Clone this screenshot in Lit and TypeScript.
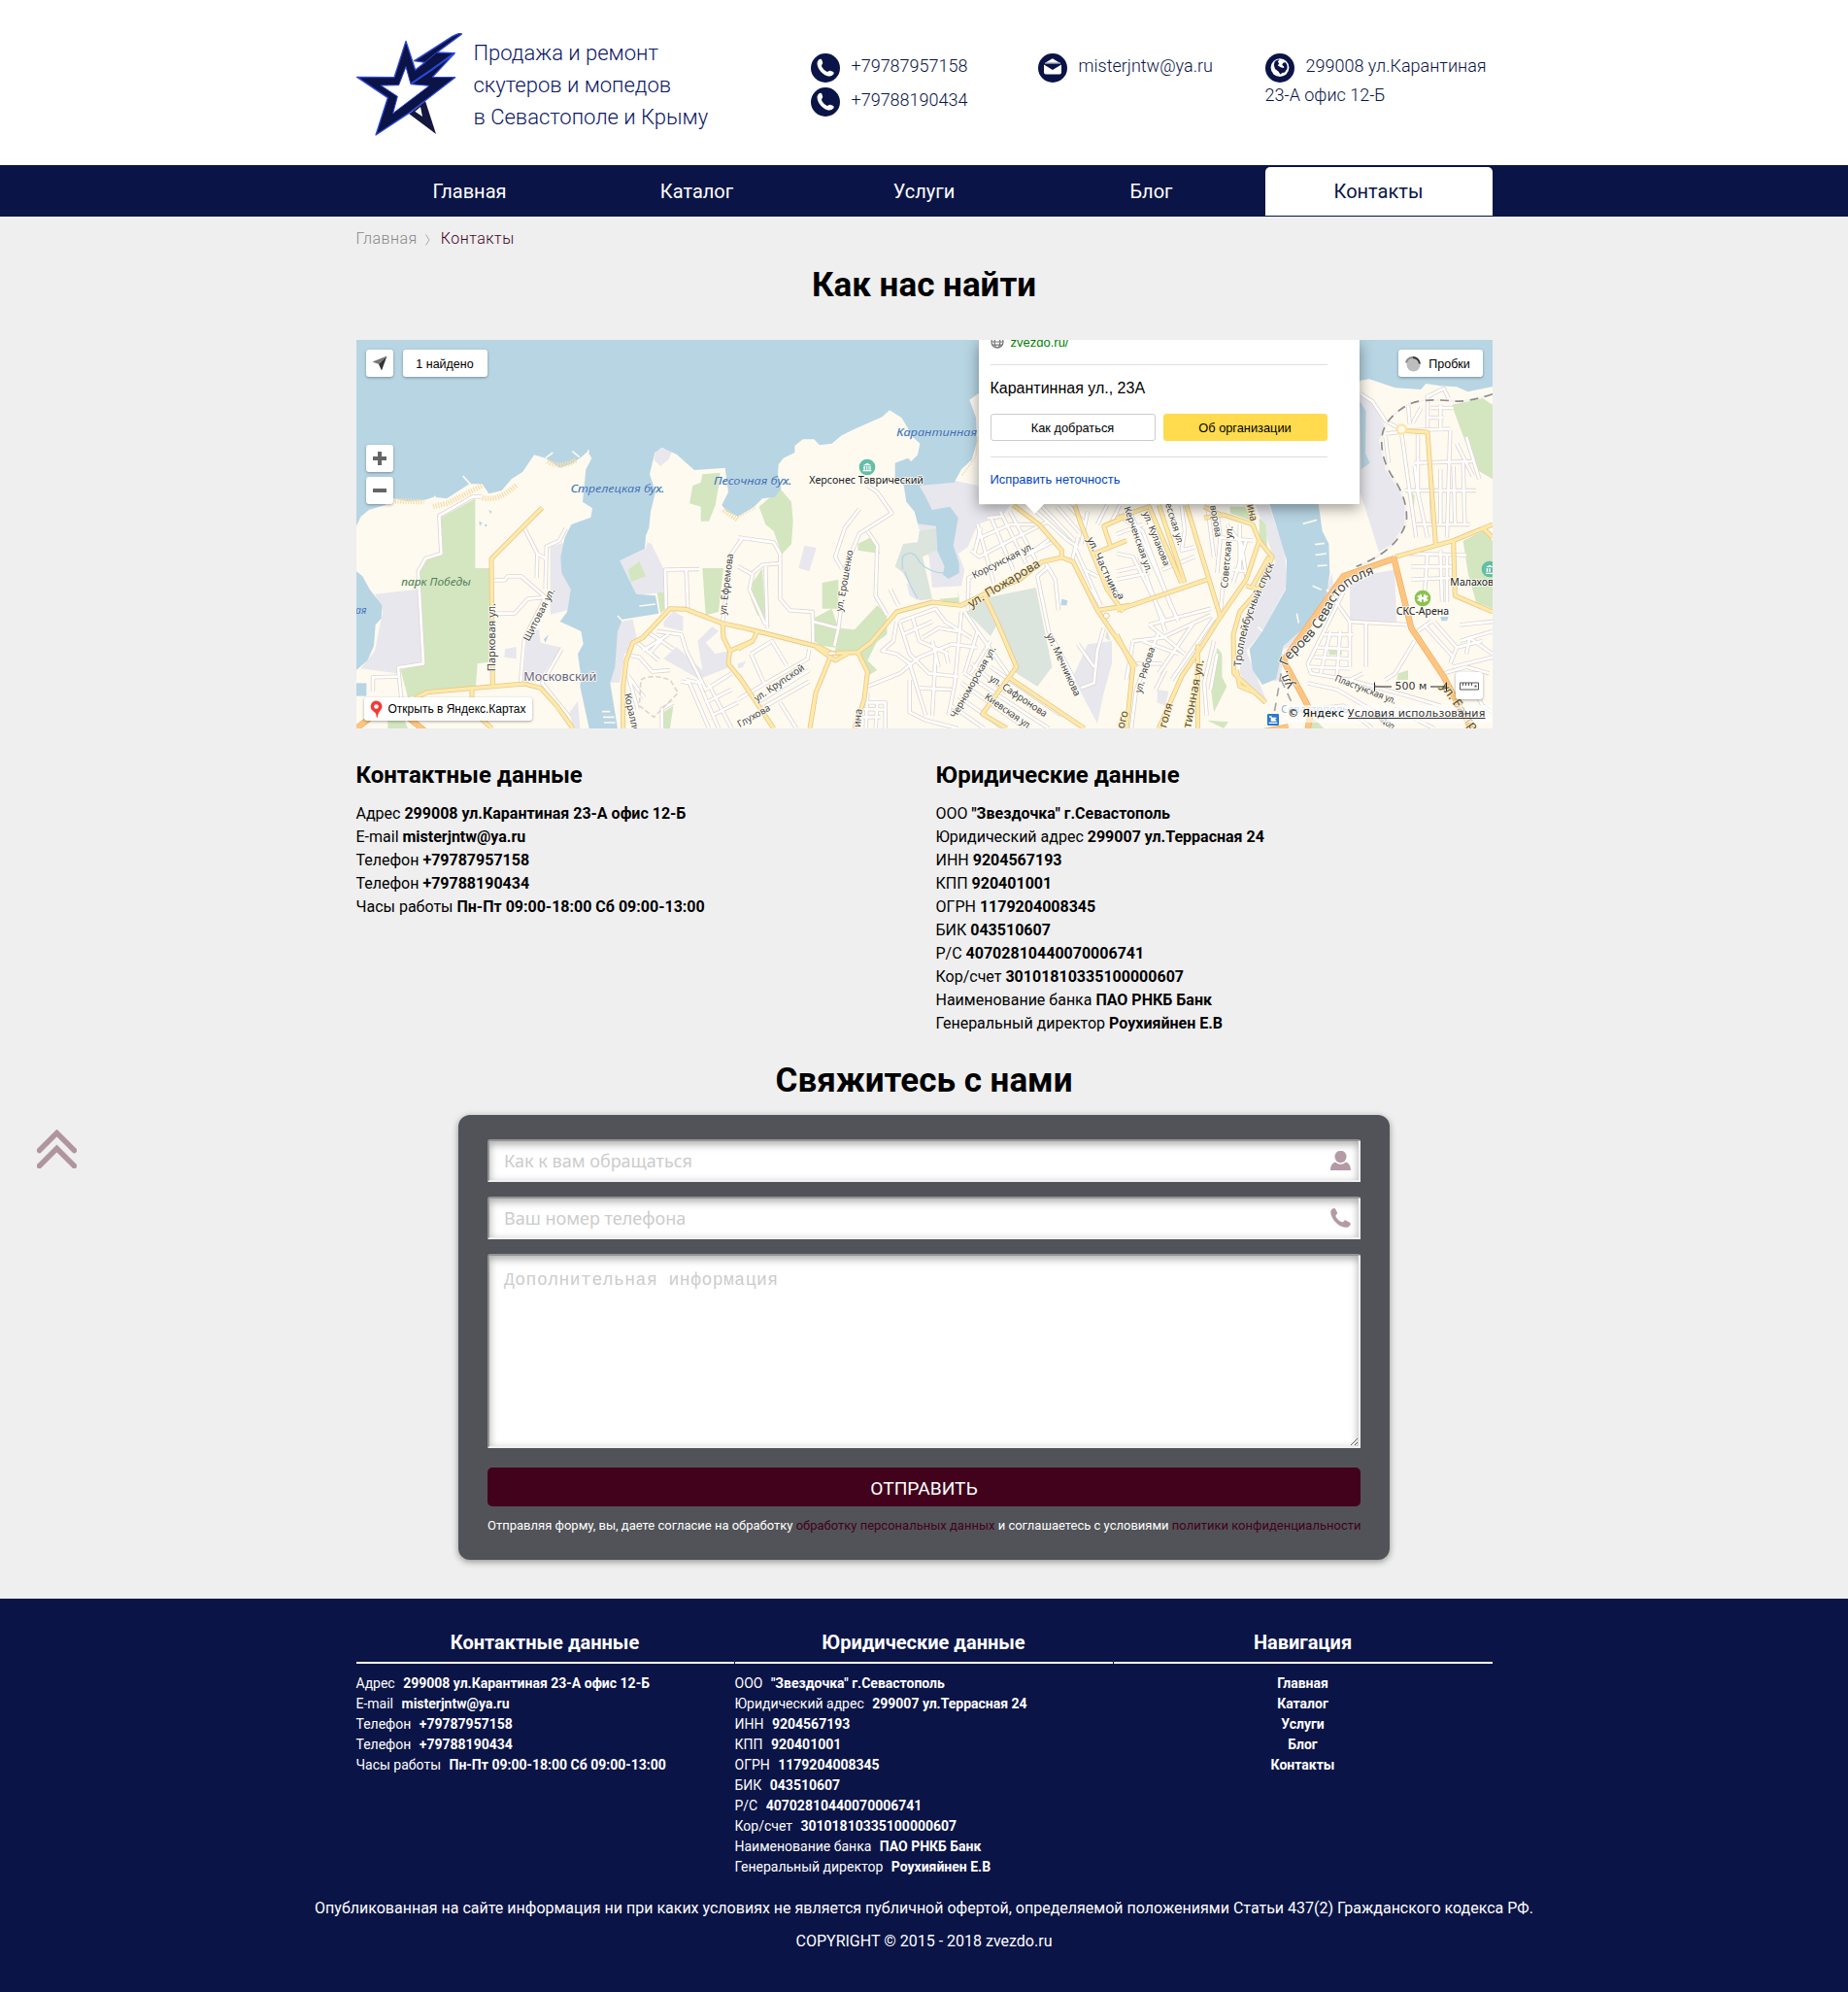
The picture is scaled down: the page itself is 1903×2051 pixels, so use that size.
import { LitElement, html, css, svg } from "lit";
import { customElement, property } from "lit/decorators.js";

type Row = [string, string];

const CONTACTS: Row[] = [
  ["Адрес", "299008 ул.Карантиная 23-А офис 12-Б"],
  ["E-mail", "misterjntw@ya.ru"],
  ["Телефон", "+79787957158"],
  ["Телефон", "+79788190434"],
  ["Часы работы", "Пн-Пт 09:00-18:00 Сб 09:00-13:00"],
];

const LEGAL: Row[] = [
  ["ООО", '"Звездочка" г.Севастополь'],
  ["Юридический адрес", "299007 ул.Террасная 24"],
  ["ИНН", "9204567193"],
  ["КПП", "920401001"],
  ["ОГРН", "1179204008345"],
  ["БИК", "043510607"],
  ["Р/С", "40702810440070006741"],
  ["Кор/счет", "30101810335100000607"],
  ["Наименование банка", "ПАО РНКБ Банк"],
  ["Генеральный директор", "Роухияйнен Е.В"],
];

const PAGES = ["Главная", "Каталог", "Услуги", "Блог", "Контакты"];

const phoneIcon = html`<svg class="ico" viewBox="0 0 30 30">
  <circle cx="15" cy="15" r="15" fill="#0a1446" />
  <path
    fill="#fff"
    d="M8.2 6.6 C9.6 5.2 11 5.9 11.5 7.3 L12.2 9.6 C12.5 10.7 11.2 11.6 11 12.6 C11.3 15 14.4 18.2 16.9 18.9 C18 18.8 18.7 17.4 19.8 17.7 L22.6 18.7 C23.9 19.3 24 20.6 23.2 21.6 C21.6 23.6 19 23.9 16.3 22.9 C11.4 21 7.4 16.2 6.6 11.4 C6.3 9.4 6.9 7.7 8.2 6.6Z"
  />
</svg>`;

const mailIcon = html`<svg class="ico" viewBox="0 0 30 30">
  <circle cx="15" cy="15" r="15" fill="#0a1446" />
  <path fill="#fff" d="M7.6 9.6 L14.8 5.2 L22 9.6Z" />
  <path fill="#fff" d="M6 11.6 L14.9 17 L24 11.6 V19.5 Q24 21.4 22 21.4 H8 Q6 21.4 6 19.5Z" />
  <path fill="#0a1446" d="M7.2 10.4 H22.8 L15 15.6Z" />
  <path d="M7 10 H23" stroke="#fff" stroke-width="0.9" />
</svg>`;

const globeIcon = html`<svg class="ico" viewBox="0 0 30 30">
  <circle cx="15" cy="15" r="15" fill="#0a1446" />
  <circle cx="15" cy="14.6" r="9.4" fill="#fff" />
  <path
    fill="#0a1446"
    d="M9.6 8.4 C11 7.2 12.8 6.6 14.6 6.6 L12.8 8.6 L14.2 10.2 L12.8 12.6 L16.4 14.6 L19.2 15 L19 13.2 L17.2 12 L18.2 9.8 L20.8 9.2 C22.4 11 23 13.4 22.4 15.8 L20 19.6 L17.4 20 L15.4 21.4 L13.4 18.4 L10 16 L8.8 12Z"
  />
</svg>`;

const logo = html`<svg class="logo" viewBox="21 42 327 318">
  <path fill="#14183f" d="M184 292 L234 252 L267 354Z" />
  <path fill="#fff" d="M202 284 L219 270 L225 300Z" />
  <path
    fill="#0b1347"
    stroke="#2d49d6"
    stroke-width="4"
    stroke-linejoin="round"
    d="M23 178 L138 179 L174 67 L203 156 L233 133 L200 128 L318 52 Q346 38 346 46 L270 102 L325 104 L256 178 L326 179 L188 286 L81 357 L118 242Z"
  />
  <path fill="#fff" stroke="#2d49d6" stroke-width="3" d="M97 204 L152 203 L174 146 L189 200 L246 205 L134 290 L148 238Z" />
  <path fill="none" stroke="#2d49d6" stroke-width="6" d="M189 199 L250 158 L322 106" />
  <path fill="none" stroke="#2d49d6" stroke-width="3" d="M232 133 L268 103" />
</svg>`;

@customElement("site-header")
export class SiteHeader extends LitElement {
  static styles = css`
    :host { display: block; background: #fff; height: 170px; }
    .inner { width: 1170px; margin: 0 auto; display: grid; grid-template-columns: 468px 234px 234px 234px; }
    .brand { display: flex; padding-top: 34px; gap: 12px; color: #0b1766; }
    .logo { width: 109px; height: 106px; flex: none; }
    .slogan { font-size: 22px; line-height: 33px; font-weight: 300; padding-top: 4px; white-space: nowrap; }
    .contact { padding-top: 54px; font-size: 18px; line-height: 27px; font-weight: 300; color: #0a1446; }
    .line { margin-bottom: 4px; }
    .ico { width: 30px; height: 30px; vertical-align: -11px; margin-right: 12px; }
    .wrapped { padding-top: 55px; line-height: 25px; }
  `;
  render() {
    return html`<div class="inner">
      <div class="brand">${logo}<div class="slogan">Продажа и ремонт<br />скутеров и мопедов<br />в Севастополе и Крыму</div></div>
      <div class="contact">
        <div class="line">${phoneIcon}+79787957158</div>
        <div class="line">${phoneIcon}+79788190434</div>
      </div>
      <div class="contact"><div class="line">${mailIcon}misterjntw@ya.ru</div></div>
      <div class="contact wrapped"><div class="line">${globeIcon}299008 ул.Карантиная 23-А офис 12-Б</div></div>
    </div>`;
  }
}

@customElement("site-nav")
export class SiteNav extends LitElement {
  static styles = css`
    :host { display: block; background: #0a1446; height: 53px; }
    nav { width: 1170px; margin: 0 auto; display: grid; grid-template-columns: repeat(5, 1fr); padding-top: 2px; }
    a { height: 50px; line-height: 50px; text-align: center; color: #fff; font-size: 20px; }
    .on { background: #fff; color: #0a1446; border-radius: 5px 5px 0 0; }
  `;
  render() {
    return html`<nav>${PAGES.map((p, i) => html`<a class=${i === 4 ? "on" : ""}>${p}</a>`)}</nav>`;
  }
}

/* ---- Map drawing. One map unit is a third of a pixel; three sheets sit side by side. ---- */

const SHEET = [0, 1200, 2370];

const poly = (fill: string, sheet: number, points: string[]) =>
  svg`<g transform="translate(${SHEET[sheet]},0)" fill=${fill}>${points.map((p) => svg`<polygon points=${p} />`)}</g>`;

const WHITE: string[][] = [
  [
    "408,514 380,514 277,573 283,690 235,705 212,745 228,1030 150,1042 160,1140",
    "150,1070 72,1072 72,1115",
    "540,612 580,690 578,765", "580,690 605,705", "668,612 648,650 608,668 605,800",
    "445,772 480,772 488,760 530,760 605,825 550,830 510,875 455,875",
    "605,825 540,950 528,1090", "655,985 595,1090 680,1195",
    "1040,740 1045,860", "978,860 975,740 1080,738", "1215,640 1180,690 1152,905",
    "890,965 955,1020", "925,935 1000,985", "985,940 905,990", "960,960 925,1000",
    "950,930 1025,940 1040,990 1100,1110 1180,1060", "1085,1090 1040,1080",
    "862,1070 910,1135", "860,1065 890,1170", "1025,1085 1050,1090 1110,1230", "1075,1080 1140,1230",
    "1110,1095 1180,1230", "1100,1150 1180,1110", "1120,1190 1200,1150", "965,1230 965,1170 1000,1150",
    "870,1005 895,1010 935,1055 990,1050",
  ],
  [
    "0,640 110,655 130,690 130,830 160,865 230,870 232,965",
    "0,730 45,755 35,800 85,910", "45,750 75,725 130,720", "85,730 90,920",
    "232,900 310,920 298,975", "310,920 318,860", "375,552 330,610 300,700 320,735",
    "400,480 430,500 475,565 375,628 330,735", "400,620 430,665 425,820 460,880", "470,800 495,850",
    "40,1000 105,960 150,1035", "0,1140 215,1015 220,985", "60,1150 220,1050", "70,1170 220,1085", "130,1150 180,1230",
    "40,1000 80,1090", "390,1150 455,1150 455,1230", "385,1170 450,1172", "385,1195 440,1195", "400,1120 395,1230", "430,1150 425,1230",
    "490,900 480,960 445,990 490,1000 530,1030 580,1190", "500,900 610,860 640,900 720,950",
    "500,905 530,1000 590,1060 680,1070", "540,890 560,960 650,1000", "510,940 600,900",
    "690,870 670,1090 650,1190", "570,950 620,920 680,930", "600,960 620,1040", "560,1105 660,1110",
    "610,1010 600,1190", "640,990 650,1030", "400,1100 500,1060 560,1010 660,970 740,980",
    "700,870 740,930 840,1070", "740,930 700,1060", "780,960 720,1060", "530,1080 530,1180 580,1205 680,1230",
    "720,1030 830,1120", "700,1060 960,1230", "690,1090 890,1230", "780,1040 1000,1190", "680,1130 820,1230", "660,1160 760,1230",
    "710,860 712,765 760,740", "960,730 925,760 960,930 1040,1080", "950,720 980,770 990,865",
    "1130,920 1110,990 1100,1090 1060,1105", "1050,970 1100,1040",
    "720,680 745,700 840,650 960,590", "740,600 790,780", "780,575 850,740", "810,560 890,720",
    "750,640 840,600 930,600", "840,560 920,710", "730,690 750,610", "880,700 970,655", "900,690 970,640", "770,580 820,575",
    "905,545 1020,650 1050,670", "940,545 1035,645", "985,545 1055,625", "1020,540 1075,600",
    "1050,640 1030,720", "1040,670 1120,850", "1080,560 1060,660", "1140,540 1110,600", "1180,540 1150,600",
    "1070,740 1110,760", "1090,800 1120,850",
  ],
  [
    "0,570 80,620 170,860", "0,690 50,700 150,900", "40,560 130,760 190,900", "70,700 130,870 150,930",
    "0,630 80,600", "0,745 70,730", "0,770 100,750", "200,540 210,620 200,680 240,670", "140,740 240,700",
    "100,910 290,860", "50,960 140,950 290,880", "100,910 210,1000", "50,960 30,1080", "130,930 60,1110", "240,900 130,1060",
    "80,960 190,1000", "60,1030 140,1030", "300,890 170,1080", "60,1110 45,1230", "150,1050 120,1110",
    "310,560 320,640 310,750", "340,600 385,660 400,760", "360,740 400,745", "380,600 380,740", "320,640 420,650", "320,880 330,760",
    "280,540 300,700", "300,960 270,1090 278,1190", "310,1000 290,1110", "400,650 360,780",
    "752,195 790,220 830,280 875,305", "830,330 840,410", "830,320 870,315",
    "880,320 905,500 925,640", "930,310 930,500 960,640", "960,200 960,300", "1000,230 1000,310", "1030,310 1020,640",
    "880,310 1030,305", "920,410 1100,405", "890,495 1110,495", "925,600 1090,600", "1000,430 1000,600",
    "1070,410 1075,600", "1050,350 1100,450", "1080,330 1120,460", "960,205 1010,180 1025,210", "900,230 905,290", "940,240 915,285",
    "1040,420 1045,600", "920,420 930,500", "970,450 975,590", "970,240 1040,240", "960,270 1010,270",
    "905,690 1080,695", "910,770 1030,765", "960,690 950,830", "1000,680 1005,840", "1040,730 910,730", "1020,690 1020,840",
    "715,900 910,910", "770,905 770,1040", "650,800 720,900 720,1040", "700,810 590,1030 600,1060 720,1080",
    "640,940 730,940", "620,980 720,985", "610,1010 720,1015", "590,1040 720,1045", "660,930 630,1060", "690,930 680,1070",
    "920,960 860,1060 830,1080", "720,1080 760,1060", "720,1080 900,1130 1000,1160", "590,1090 680,1110 800,1180",
    "950,910 1040,1010", "980,900 1050,980", "930,930 970,900", "1010,1060 1080,1040 1150,1060", "1030,1030 1050,980 1130,960",
    "1060,910 1161,900", "1060,960 1161,930", "1080,1000 1090,950 1161,1000", "1040,1040 1161,1010",
    "1090,1080 1130,1160 1161,1180", "820,1220 860,1170 980,1230", "600,1170 700,1160 790,1230",
  ],
];

const YELLOW: string[][] = [
  [
    "595,548 438,706 442,1095", "200,1137 240,1118 540,1092 590,1105 640,1160 690,1230",
    "378,1108 378,1135", "395,1190 440,1230",
    "845,1230 845,1100 855,1020 875,965 905,950 990,860 1040,862 1150,905 1210,918",
    "1152,905 1155,950 1175,990 1170,1030 1210,1080", "1175,990 1245,960",
  ],
  [
    "0,915 60,930 250,978 290,998 370,995 410,965 490,870 600,840 690,850 760,815 870,770 940,715 1000,702 1035,715 1110,865 1230,1040",
    "850,540 930,600 1000,680 1000,702", "285,1010 240,1120 222,1230", "370,995 400,1055 390,1140 360,1230",
    "760,815 800,900 860,1040 755,1185 830,1230", "840,1075 1070,1230", "0,985 45,960 60,930",
    "0,1065 110,1230", "1110,865 1210,850", "1040,540 1060,600 1100,700 1140,800 1190,870",
    "1100,690 1200,650", "1200,575 1130,605 1150,665", "240,978 300,1020 340,998",
  ],
  [
    "0,580 100,545 140,640 200,780", "130,540 210,780", "215,540 320,885 260,980 200,1070 130,1230",
    "0,865 280,770", "320,885 400,770 440,650 420,600 330,570 270,580", "320,570 270,545", "440,650 480,700 440,800 380,870 360,940 362,1060 460,1150",
    "440,800 400,790", "370,1050 380,1100 430,1120", "250,970 250,1230", "0,940 50,1040 30,1230",
    "860,700 1040,650 1161,600", "985,660 960,315 880,310", "1040,650 1045,820 1161,870", "1130,610 1161,640",
    "470,700 420,790",
  ],
];

const ORANGE: string[][] = [
  ["21,1230 60,1200", "180,1195 235,1240"],
  [],
  ["450,1240 530,1225", "855,700 910,920 1010,1070 1100,1240", "858,705 700,760 600,900 515,1020 580,1140 600,1180 590,1230"],
];

const roads = (data: string[][], casing: string, fill: string, wide: number, narrow: number) =>
  [[casing, wide] as const, [fill, narrow] as const].map(
    ([color, w]) => svg`<g fill="none" stroke=${color} stroke-width=${w} stroke-linejoin="round" stroke-linecap="butt">
      ${data.map((lines, i) => svg`<g transform="translate(${SHEET[i]},0)">${lines.map((p) => svg`<polyline points=${p} />`)}</g>`)}
    </g>`
  );

type Label = [sheet: number, x: number, y: number, rot: number, len: number, size: number, cls: string, text: string];

const LABELS: Label[] = [
  [0, 683, 500, 0, 290, 35, "sea", "Стрелецкая бух."],
  [0, 1125, 478, 0, 241, 35, "sea", "Песочная бух."],
  [1, 490, 328, 0, 248, 35, "sea", "Карантинная"],
  [0, 18, 876, 0, 34, 35, "sea", "ая"],
  [0, 160, 790, 0, 214, 34, "park", "парк Победы"],
  [0, 538, 1082, 0, 225, 36, "area", "Московский"],
  [0, 450, 1054, -90, 211, 32, "st", "Парковая ул."],
  [0, 554, 962, -63, 178, 30, "st", "Щитовая ул."],
  [0, 848, 1124, 77, 125, 30, "st", "Коралло"],
  [0, 1162, 880, -83, 190, 30, "st", "ул. Ефремова"],
  [1, 220, 475, 0, 353, 32, "poi", "Херсонес Таврический"],
  [1, 322, 870, -80, 192, 30, "st", "ул. Ерошенко"],
  [1, 730, 768, -27, 208, 30, "st", "Корсунская ул."],
  [1, 720, 858, -31, 252, 38, "big", "ул. Пожарова"],
  [1, 1078, 645, 65, 205, 31, "st", "ул. Частника"],
  [1, 952, 942, 65, 210, 30, "st", "ул. Мечникова"],
  [1, 672, 1200, -60, 250, 29, "st", "Черноморская ул."],
  [1, 775, 1080, 34, 207, 30, "st", "ул. Сафронова"],
  [1, 760, 1137, 35, 170, 30, "st", "Киевская ул."],
  [1, 58, 1148, -34, 180, 30, "st", "ул. Крупской"],
  [1, 5, 1228, -30, 112, 30, "st", "Глухова"],
  [1, 378, 1228, -85, 58, 32, "st", "ина"],
  [1, 1192, 1232, -75, 55, 34, "big", "ого"],
  [2, 22, 548, 71, 215, 29, "st", "Керченская ул."],
  [2, 80, 565, 68, 178, 29, "st", "ул. Кулакова"],
  [2, 150, 537, 73, 135, 29, "st", "есская ул."],
  [2, 288, 542, 80, 100, 29, "st", "ворова"],
  [2, 342, 797, -85, 192, 30, "st", "Советская ул."],
  [2, 402, 540, 78, 52, 34, "big", "ина"],
  [2, 75, 1122, -73, 146, 30, "st", "ул. Рябова"],
  [2, 228, 1230, -79, 214, 35, "big", "тионная ул."],
  [2, 152, 1230, -74, 78, 35, "big", "голя"],
  [2, 0, 815, 70, 20, 28, "st", "а"],
  [2, 863, 880, 0, 163, 31, "poi", "СКС-Арена"],
  [2, 1030, 790, 0, 134, 31, "poi", "Малахов"],
  [2, 672, 1083, 21, 200, 29, "st", "Пластунская ул."],
  [2, 1000, 1100, 55, 170, 38, "big", "ул. Бастр"],
  [2, 795, 1190, 40, 70, 30, "st", "додоп"],
  [2, 507, 1181, 0, 208, 32, "rail", "Севастополь"],
];

@customElement("city-map")
export class CityMap extends LitElement {
  static styles = css`
    :host { display: block; position: relative; width: 1170px; height: 400px; overflow: hidden; font-family: "Liberation Sans", Arial, sans-serif; font-size: 13px; color: #000; background: #fefaf0; }
    .canvas { display: block; width: 1170px; height: 400px; font-family: "Noto Sans", sans-serif; }
    .canvas text { paint-order: stroke; stroke: #fffdf6; stroke-width: 5px; stroke-linejoin: round; }
    .canvas .sea { fill: #4373b4; font-style: italic; stroke: #c3dcea; stroke-width: 2px; }
    .canvas .park { fill: #55805c; font-style: italic; stroke: #d3e6c0; stroke-width: 2px; }
    .canvas .area { fill: #66667f; }
    .canvas .st { fill: #444; }
    .canvas .big { fill: #57503f; stroke: #ffefc0; }
    .canvas .poi { fill: #222; }
    .canvas .rail { fill: #8bb2dd; }
    .ctl { position: absolute; box-sizing: border-box; background: #fff; border-radius: 3px; box-shadow: 0 1px 3px rgba(0, 0, 0, 0.35); height: 28px; display: flex; align-items: center; justify-content: center; white-space: nowrap; }
    .ctl svg { flex: none; }
    .geo { left: 10px; top: 10px; width: 28px; }
    .found { left: 48px; top: 10px; width: 87px; padding-top: 1px; font-size: 12.5px; }
    .zin { left: 10px; top: 108px; width: 28px; }
    .zout { left: 10px; top: 141px; width: 28px; }
    .open { left: 8px; top: 368px; width: 173px; height: 24px; gap: 6px; font-size: 12px; }
    .traffic { left: 1073px; top: 10px; width: 87px; gap: 8px; padding: 1px 5px 0 0; font-size: 12.5px; }
    .ruler { left: 1132px; top: 342px; width: 28px; }
    .scale { position: absolute; left: 1048px; top: 349px; display: flex; align-items: center; gap: 4px; font: 11px/16px "DejaVu Sans", Verdana, sans-serif; color: #333; }
    .scale svg { display: block; }
    .copy { position: absolute; right: 0; bottom: 6px; padding: 0 7px 0 2px; font: 11px/18px "DejaVu Sans", Verdana, sans-serif; letter-spacing: 0.19px; background: rgba(255, 255, 255, 0.6); white-space: nowrap; }
    .copy u { color: #333; }
    .balloon { position: absolute; box-sizing: border-box; left: 641px; top: 0; width: 392px; height: 169px; padding: 0 33px 0 12px; background: #fff; box-shadow: 0 4px 14px rgba(0, 0, 0, 0.4); }
    .tail { position: absolute; left: 688px; top: 168px; }
    .site { display: flex; gap: 7px; height: 25px; border-bottom: 1px solid #dedede; color: #008000; }
    .site span { line-height: 16px; margin-top: -5px; }
    .site svg { margin-top: -5px; }
    .addr { font-size: 16px; line-height: 20px; padding-top: 14px; }
    .acts { display: grid; grid-template-columns: 170px 169px; gap: 8px; margin-top: 16px; }
    .btn { box-sizing: border-box; height: 28px; line-height: 27px; text-align: center; border: 1px solid #ccc; border-radius: 3px; font-size: 12.800px; }
    .main { background: #ffdb4d; border-color: #ffdb4d; }
    .fix { margin-top: 16px; border-top: 1px solid #dedede; padding-top: 15px; line-height: 16px; color: #04b; font-size: 12.900px; }
  `;

  render() {
    return html`
      <svg class="canvas" viewBox="21 30 3510 1200">
        <rect x="21" y="30" width="3510" height="1200" fill="#fefaf0" />
        ${poly("#e8e7ed", 0, [
          "78,815 210,800 222,1030 145,1060 35,1045 78,990 102,870",
          "620,670 665,655 655,750 683,800 672,865 620,878",
          "550,930 585,925 590,965 655,980 600,1060 605,1085 535,1085",
          "480,985 515,978 515,1015 478,1010", "680,1180 705,1145 712,1230 690,1230",
          "940,400 945,375 965,366 998,372 985,400 960,420",
          "835,712 915,675 920,655 932,660 972,740 970,810 885,818",
          "830,900 875,893 888,955 850,1000 835,1088 805,1088",
          "970,900 1000,868 1030,885 1030,930 970,915", "1075,960 1120,915 1140,930 1100,965 1130,1000 1170,990 1175,1040 1080,1078 970,1015 1010,978 1090,1050",
        ])}
        ${poly("#e8e7ed", 1, [
          "560,480 670,465 742,480 745,540 840,540 820,570 740,600 710,670 680,690 700,740 690,790 600,795 590,700 555,600 600,555",
          "205,665 242,672 220,745 187,735", "0,1030 25,1022 15,1040 0,1045",
          "1080,970 1155,960 1155,1030 1130,1120 1110,1215 1060,1120 1035,1070", "520,780 545,800 555,835 530,820",
        ])}
        ${poly("#e8e7ed", 2, [
          "752,195 790,225 830,300 810,340 830,430 890,520 890,600 850,660 810,685 752,500",
          "430,540 470,540 520,690 525,790 450,930 400,990 440,1090 465,1150 420,1120 380,1060 390,900 490,720",
          "720,790 800,750 858,740 865,900 720,905", "650,800 665,750 670,800 560,970 515,985 510,970 600,900",
          "125,1110 160,1115 150,1160 125,1150", "500,1000 515,1000 505,1080 485,1085",
        ])}
        ${poly("#d3e6c0", 0, [
          "280,580 388,520 388,735 435,740 440,850 430,1025 395,1030 390,1100 240,1115 180,1135 158,1050 228,1030 215,745 240,705 285,695",
          "388,735 435,735 435,850 395,850", "1060,480 1085,470 1090,445 1145,440 1140,480 1130,540 1110,590 1085,590 1085,545 1050,535",
          "860,740 895,715 915,760 870,778", "950,810 975,810 978,860 960,875", "1090,735 1155,735 1140,870 1100,880",
          "118,1205 170,1205 180,1230 118,1230", "970,1180 1000,1160 990,1230 970,1230",
        ])}
        ${poly("#d3e6c0", 1, [
          "65,545 130,490 165,530 170,590 165,660 135,692 110,620 85,600",
          "45,780 75,735 85,890 60,880 40,830",
          "260,780 310,770 310,860 260,860", "232,890 290,860 310,920 300,980 260,975 232,960",
          "310,920 360,925 430,850 460,880 460,940 380,1000 300,990", "380,1000 430,960 400,1020 430,1050 405,1065",
          "370,660 410,640 440,690 370,680", "620,830 680,825 680,800 684,840 650,845",
        ])}
        ${poly("#d3e6c0", 2, [
          "1035,230 1130,210 1161,230 1161,460 1110,430 1060,300", "1070,650 1130,620 1161,650 1161,860 1110,840 1085,750",
          "440,580 460,600 465,670 440,650", "350,545 395,545 420,590 350,565", "310,980 325,1000 325,1070 340,1100 300,1180 290,1100",
          "655,985 695,985 695,1003 655,1003", "870,1060 900,1050 900,1080 865,1080", "910,500 920,510 915,600",
          "600,1190 640,1230 600,1230", "280,1205 345,1210 330,1230",
        ])}
        ${poly("#dbe4dd", 1, [
          "775,825 920,795 970,1040 925,1100 860,1060", "705,870 760,830 800,910 780,945",
          "485,730 510,660 555,655 560,620 612,612 612,680 570,700 600,830 560,835 510,750", "1140,925 1150,960 1135,950",
        ])}
        ${poly("#b8d5e4", 0, [
          "21,30 3531,30 3531,174 3455,190 3420,175 3370,172 3325,165 3310,183 3230,178 3150,151 3122,155 3100,200 1943,195 1915,215 1935,270 1938,345 1922,400 1890,430 1868,470 1760,480 1780,515 1800,555 1855,545 1880,580 1865,665 1883,720 1883,750 1850,768 1833,755 1838,730 1815,680 1812,605 1755,598 1745,560 1720,530 1712,480 1685,455 1685,410 1725,395 1735,405 1755,385 1762,350 1740,330 1720,295 1705,270 1668,247 1645,268 1560,305 1520,325 1490,350 1452,355 1435,337 1400,337 1375,357 1375,378 1340,395 1325,415 1323,445 1333,490 1315,515 1275,520 1250,545 1200,575 1165,560 1150,540 1170,500 1160,425 1065,432 1010,383 965,363 943,378 927,445 945,500 930,560 925,610 915,635 912,675 835,712 885,815 945,820 955,875 843,893 828,930 820,1040 805,1090 828,1230 740,1230 712,1100 715,1070 705,1000 722,970 715,930 690,918 650,900 672,870 683,800 655,750 652,700 665,640 685,600 745,578 750,550 720,530 730,430 748,395 735,375 718,390 690,410 650,425 605,395 570,385 535,437 500,460 470,495 430,505 410,475 370,475 300,520 260,515 230,525 180,528 135,520 110,540 60,555 35,575 21,605",
          "21,745 40,760 62,800 100,850 98,890 80,910 75,975 55,1020 21,1050",
          "600,955 615,940 605,965", "400,590 410,595 402,605", "430,555 440,560 435,567", "415,600 425,600 422,608", "21,1090 52,1090 52,1130 21,1130",
        ])}
        ${poly("#b8d5e4", 1, ["1000,830 1018,835 1015,850 997,850"])}
        ${poly("#b8d5e4", 2, [
          "470,530 525,710 522,800 450,930 410,985 420,1050 450,1095 492,1078 515,975 600,900 650,810 658,750 655,660 635,620 622,530",
          "751,220 770,250 768,380 782,410 755,430", "1000,885 1025,885 1020,898 1003,898",
        ])}
        <g fill="none" stroke="#fefaf0" stroke-width="5">
          <path d="M350 450 L375 478 M605 395 L628 378 M688 374 L710 392 M735 392 L738 370 M270 530 L262 512 M895 852 L945 846 M828 882 L845 900 M780 1178 h25 M783 1195 h35 M786 1212 h35" />
          <path transform="translate(2370,0)" d="M575 598 L618 586 M612 662 L642 658 M614 694 L648 690 M620 728 L650 726 M605 790 L632 802 M556 875 L562 905 M436 916 L450 930" />
        </g>
        <g fill="none" stroke="#f6dfae" stroke-width="9" stroke-dasharray="4 4">
          <path d="M258 545 L300 535 L370 500 L408 480 M410 518 Q460 530 515 478 M612 405 Q650 430 702 400 M140 527 L230 530 M1155 555 L1198 585" stroke-width="16" />
          <path transform="translate(1200,0)" d="M0 578 L55 548 M740 330 L735 390 L690 450" stroke-width="5" />
        </g>
        <path transform="translate(1200,0)" d="M508 740 V700 Q540 670 560 715 Q590 750 640 750 M515 745 Q530 790 555 830" fill="none" stroke="#b8d5e4" stroke-width="4" />
        ${roads(WHITE, "#ded6d0", "#ffffff", 13, 8)}
        <g fill="none" stroke="#ded6d0" stroke-width="5" stroke-dasharray="16 8">
          <path d="M900 1080 Q930 1060 990 1080 L1015 1120 L940 1195 L895 1160 Z" />
        </g>
        <g fill="none" transform="translate(2370,0)">
          <path d="M1161 197 Q1080 225 1030 218 Q940 210 900 230 Q820 275 818 340 Q818 400 850 450 Q900 520 895 590 Q870 680 740 730" stroke="#f4f2ee" stroke-width="7" />
          <path d="M1161 197 Q1080 225 1030 218 Q940 210 900 230 Q820 275 818 340 Q818 400 850 450 Q900 520 895 590 Q870 680 740 730" stroke="#8c8c8c" stroke-width="5" stroke-dasharray="26 20" />
          <path d="M508 1060 L485 1190 M508 1080 L545 1160" stroke="#a5a5a5" stroke-width="5" stroke-dasharray="26 20" />
        </g>
        ${roads(YELLOW, "#e6c98f", "#ffe9a8", 15, 10)}
        <g fill="#fefaf0" stroke="#e6c98f" stroke-width="3">
          <ellipse cx="1490" cy="998" rx="14" ry="6" /><circle cx="2338" cy="882" r="9" /><circle cx="3250" cy="306" r="14" stroke="#ffe3a0" stroke-width="7" />
        </g>
        ${roads(ORANGE, "#e8ae6d", "#ffc57f", 19, 15)}
        ${LABELS.map(
          ([s, x, y, rot, len, size, cls, text]) =>
            svg`<text class=${cls} transform="translate(${SHEET[s] + x},${y}) rotate(${rot})" font-size=${size} textLength=${len} lengthAdjust="spacingAndGlyphs">${text}</text>`
        )}
        <g transform="translate(2370,0)">
          <path id="spusk" fill="none" d="M384 1040 Q395 920 445 815 Q470 760 497 700" />
          <path id="geroev" fill="none" d="M548 1098 C518 1050 520 1030 560 992 C610 950 640 905 665 855 C695 795 740 770 830 740" />
          <text class="st" font-size="32"><textPath href="#spusk">Троллейбусный спуск</textPath></text>
          <text class="st" font-size="41"><textPath href="#geroev">ул. Героев Севастополя</textPath></text>
          <circle cx="945" cy="828" r="25" fill="#8bc34f" />
          <path d="M929 820 h7 v-4 h6 v8 h6 v-8 h6 v4 h7 v6 h-4 v4 h4 v6 h-7 v4 h-6 v-8 h-6 v8 h-6 v-4 h-7 v-6 h4 v-4 h-4z" fill="#fff" />
          <circle cx="1152" cy="738" r="25" fill="#62bfa6" />
          <path d="M1140 732 L1152 725 L1164 732Z M1142 735 h4 v12 h-4z M1150 735 h4 v12 h-4z M1140 749 h24 v4 h-24z" fill="#fff" />
          <rect x="465" y="1185" width="36" height="36" rx="3" fill="#2b78cf" />
          <path d="M471 1192 h8 v4 h14 v4 h-3 v4 h3 v4 h-17 v-12 h-5z M470 1211 h26 v4 h-26z" fill="#fff" />
        </g>
        <g transform="translate(1599,423)">
          <circle r="25" fill="#62bfa6" />
          <path d="M-13 -5 L0 -13 L13 -5Z M-11 -3 h5 v11 h-5z M-3 -3 h2.500 v11 h-2.500z M2 -3 h2.500 v11 h-2.500z M7 -3 h4 v11 h-4z M-13 9 h26 v4 h-26z" fill="#fff" />
        </g>
      </svg>

      <div class="balloon">
        <div class="site">
          <svg width="14" height="14" viewBox="0 0 14 14" fill="none" stroke="#777" stroke-width="1.200"><circle cx="7" cy="7" r="6" /><ellipse cx="7" cy="7" rx="2.800" ry="6" /><path d="M1 7 h12 M2 10.200 h10 M2 4 h10" /></svg>
          <span>zvezdo.ru/</span>
        </div>
        <div class="addr">Карантинная ул., 23А</div>
        <div class="acts"><div class="btn">Как добраться</div><div class="btn main">Об организации</div></div>
        <div class="fix">Исправить неточность</div>
      </div>
      <svg class="tail" width="21" height="12" viewBox="0 0 21 12"><path d="M0 0 H21 L10.500 11Z" fill="#fff" /></svg>

      <div class="ctl geo"><svg width="16" height="16" viewBox="0 0 16 16"><path d="M0.500 6.500 L15.500 0.500 L7 9Z" fill="#777" /><path d="M15.500 0.500 L10 15.500 L7 9Z" fill="#333" /></svg></div>
      <div class="ctl found">1 найдено</div>
      <div class="ctl zin"><svg width="14" height="14" viewBox="0 0 14 14"><path d="M5 0 h4 v5 h5 v4 h-5 v5 h-4 v-5 h-5 v-4 h5z" fill="#666" /></svg></div>
      <div class="ctl zout"><svg width="14" height="14" viewBox="0 0 14 14"><path d="M0 5 h14 v4 h-14z" fill="#666" /></svg></div>
      <div class="ctl open">
        <svg width="13" height="19" viewBox="0 0 13 19"><path d="M6.500 0.500 A6 6 0 0 1 12.500 6.500 C12.500 10 8.500 11 7.600 18 H6.900 C6.500 14 5.800 12.800 3.500 11.600 A6 6 0 0 1 6.500 0.500Z" fill="#f43b35" /><circle cx="6.500" cy="6.500" r="2.300" fill="#fff" /></svg>
        Открыть в Яндекс.Картах
      </div>
      <div class="ctl traffic">
        <svg width="16" height="16" viewBox="0 0 16 16"><circle cx="8.500" cy="8.500" r="7" fill="#bdbdbd" /><path d="M1 6.500 A7.500 7.500 0 0 1 7 1" stroke="#888" stroke-width="2" fill="none" /><path d="M7.500 1 A7.200 7.200 0 0 1 15 7.500" stroke="#333" stroke-width="2" fill="none" /></svg>
        Пробки
      </div>
      <div class="ctl ruler"><svg width="20" height="9" viewBox="0 0 20 9"><path d="M0.500 1 h19 v7 h-19z M3.500 1 v3 M6.500 1 v3 M9.500 1 v3 M12.500 1 v3" fill="none" stroke="#555" /><path d="M15.500 3.500 h2 v2 h-2z" fill="#555" /></svg></div>
      <div class="scale">
        <svg width="18" height="10" viewBox="0 0 18 10"><path d="M0.500 0.500 v9 M0 5 h18" stroke="#222" fill="none" /></svg>500 м<svg width="17" height="10" viewBox="0 0 17 10"><path d="M16.500 0.500 v9 M0 5 h17" stroke="#222" fill="none" /></svg>
      </div>
      <div class="copy">© Яндекс <u>Условия использования</u></div>
    `;
  }
}

@customElement("data-list")
export class DataList extends LitElement {
  static styles = css`
    :host { display: block; }
    h2 { margin: 0 0 13px; font-size: 24px; line-height: 30px; font-weight: 700; }
    .row { font-size: 16px; line-height: 24px; }
    b { font-weight: 700; }
  `;
  @property() heading = "";
  @property({ attribute: false }) rows: Row[] = [];
  render() {
    return html`<h2>${this.heading}</h2>${this.rows.map(([k, v]) => html`<div class="row">${k} <b>${v}</b></div>`)}`;
  }
}

@customElement("feedback-form")
export class FeedbackForm extends LitElement {
  static styles = css`
    :host { display: block; box-sizing: border-box; width: 959px; height: 458px; margin: 15px auto 0; padding: 25px 30px 0; background: #525358; border-radius: 12px; box-shadow: 0 2px 7px rgba(0, 0, 0, 0.4); color: #fff; }
    .field { position: relative; height: 44px; margin-bottom: 15px; }
    input, textarea { display: block; box-sizing: border-box; width: 100%; margin: 0; border: 2px solid; border-color: #949494 #f0f0f0 #f0f0f0 #949494; border-radius: 3px 3px 0 0; background: #fff; box-shadow: inset 0 3px 8px rgba(0, 0, 0, 0.35); font-size: 18px; outline: none; }
    input { height: 44px; padding: 0 15px; font-family: "Noto Sans", sans-serif; }
    textarea { height: 200px; padding: 15px 15px; letter-spacing: 0.5px; font-family: "Liberation Mono", "Courier New", monospace; }
    ::placeholder { color: #ccc; opacity: 1; }
    .mark { position: absolute; right: 10px; top: 12px; width: 21px; height: 20px; }
    .send { height: 40px; margin-top: 20px; line-height: 43px; text-align: center; background: #42021b; border-radius: 5px; font-size: 19.2px; }
    .note { margin-top: 10px; font-size: 13px; line-height: 20px; white-space: nowrap; }
    .note a { color: #42021b; }
  `;
  render() {
    return html`
      <div class="field"><input placeholder="Как к вам обращаться" /><svg class="mark" viewBox="0 0 21 20"><ellipse cx="10.500" cy="6" rx="6" ry="6.200" fill="#b39aa5" /><path d="M0 20 C0.200 15 2 12.600 5 11.600 Q10.500 16 16 11.600 C19 12.600 20.800 15 21 20Z" fill="#b39aa5" /></svg></div>
      <div class="field"><input placeholder="Ваш номер телефона" /><svg class="mark" viewBox="0 0 21 20"><path d="M2 0.800 C3.800 -0.600 5 0.200 5.600 1.600 L7 4.600 C7.500 6 5.400 6.800 5.400 8 C6 10.600 9.800 14 12.400 14.400 C13.800 14.200 14 12 15.600 12.400 L19.600 14.600 C21.200 15.600 21 16.800 20 18 C18 20.400 14.800 20.200 11.600 18.800 C6.600 16.400 2 11.400 0.600 6.400 C0 4 0.200 2.200 2 0.800Z" fill="#b39aa5" /></svg></div>
      <textarea placeholder="Дополнительная информация"></textarea>
      <div class="send">ОТПРАВИТЬ</div>
      <div class="note">Отправляя форму, вы, даете согласие на обработку <a>обработку персональных данных</a> и соглашаетесь с условиями <a>политики конфиденциальности</a></div>
    `;
  }
}

@customElement("site-footer")
export class SiteFooter extends LitElement {
  static styles = css`
    :host { display: block; box-sizing: border-box; height: 405px; padding-top: 33px; background: #0a1446; color: #fff; }
    .cols { width: 1170px; margin: 0 auto; display: grid; grid-template-columns: repeat(3, 1fr); font-size: 14px; line-height: 21px; }
    h3 { margin: 0 1px 10px 0; padding-bottom: 8px; border-bottom: 2px solid #fff; font-size: 20px; line-height: 24px; text-align: center; font-weight: 700; }
    .cols > div:last-child h3 { margin-right: 0; }
    b { font-weight: 700; }
    .row b { margin-left: 5px; }
    .link { text-align: center; }
    p { margin: 10px 0 0; text-align: center; font-size: 16px; line-height: 24px; }
    .offer { margin-top: 20px; }
  `;
  render() {
    const row = ([k, v]: Row) => html`<div class="row">${k} <b>${v}</b></div>`;
    return html`
      <div class="cols">
        <div><h3>Контактные данные</h3>${CONTACTS.map(row)}</div>
        <div><h3>Юридические данные</h3>${LEGAL.map(row)}</div>
        <div><h3>Навигация</h3>${PAGES.map((p) => html`<div class="link"><b>${p}</b></div>`)}</div>
      </div>
      <p class="offer">Опубликованная на сайте информация ни при каких условиях не является публичной офертой, определяемой положениями Статьи 437(2) Гражданского кодекса РФ.</p>
      <p>COPYRIGHT © 2015 - 2018 zvezdo.ru</p>
    `;
  }
}

@customElement("app-root")
export class AppRoot extends LitElement {
  static styles = css`
    :host { display: block; position: relative; min-height: 2051px; background: #efefef; font-family: Roboto, "Liberation Sans", sans-serif; color: #000; }
    .wrap { width: 1170px; margin: 0 auto; }
    .crumbs { padding-top: 11px; height: 24px; line-height: 24px; font-size: 16px; font-weight: 300; letter-spacing: 0.5px; color: #888; display: flex; align-items: center; }
    .crumbs svg { margin: 2px 11px 0 8px; }
    .here { color: #42021b; }
    h1 { margin: 16px 0 0; text-align: center; font-size: 35px; line-height: 40px; font-weight: 700; }
    .map { margin-top: 36px; }
    .data { display: grid; grid-template-columns: 597px 1fr; margin-top: 33px; }
    .second { margin-top: 27px; }
    feedback-form { margin-bottom: 40px; }
    .top { position: absolute; left: 38px; top: 1163px; width: 41px; height: 40px; }
  `;
  render() {
    return html`
      <site-header></site-header>
      <site-nav></site-nav>
      <div class="wrap">
        <div class="crumbs"><span>Главная</span><svg width="5" height="12" viewBox="0 0 5 12"><path d="M0.500 0.500 L4 6 L0.500 11.500" fill="none" stroke="#aaa" /></svg><span class="here">Контакты</span></div>
        <h1>Как нас найти</h1>
        <city-map class="map"></city-map>
        <div class="data">
          <data-list heading="Контактные данные" .rows=${CONTACTS}></data-list>
          <data-list heading="Юридические данные" .rows=${LEGAL}></data-list>
        </div>
        <h1 class="second">Свяжитесь с нами</h1>
        <feedback-form></feedback-form>
      </div>
      <site-footer></site-footer>
      <svg class="top" viewBox="0 0 41 40"><path d="M2.500 21.500 L20.500 3.500 L38.500 21.500 M2.500 37.500 L20.500 19.500 L38.500 37.500" fill="none" stroke="#b0959f" stroke-width="5.500" stroke-linecap="round" /></svg>
    `;
  }
}
